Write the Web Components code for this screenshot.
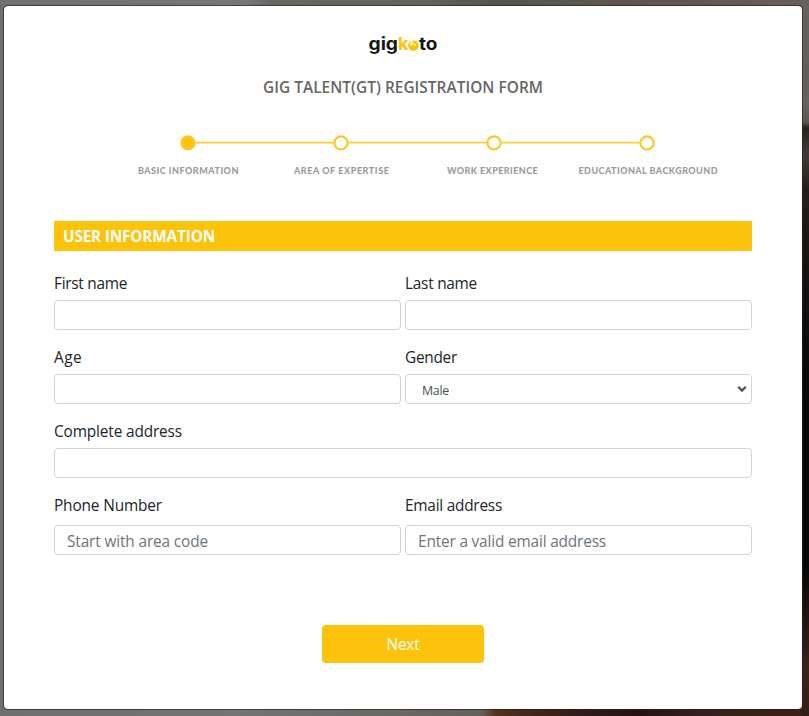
<!DOCTYPE html>
<html lang="en">
<head>
<meta charset="utf-8">
<title>Gig Talent Registration</title>
<style>
html,body{margin:0;height:100%;overflow:hidden}
body{font-family:"Open Sans","Noto Sans",sans-serif;font-size:16px;color:#212529}
</style>
</head>
<body>
<registration-page></registration-page>
<script>
const define = (name, html, setup) => customElements.define(name, class extends HTMLElement {
  constructor() {
    super();
    this.attachShadow({mode: 'open'});
  }
  connectedCallback() {
    this.shadowRoot.innerHTML = typeof html === 'function' ? html(this) : html;
    if (setup) setup(this);
  }
});

// One line of text, spaced out to an exact width.
define('fit-text', el => `<style>
:host{display:block;white-space:nowrap;line-height:24px;height:24px;width:${el.getAttribute('w')}px}
span{display:inline-block}
</style><span><slot></slot></span>`, el => {
  const span = el.shadowRoot.querySelector('span');
  const host = el.getRootNode().host;
  const length = (el.textContent.trim() || (host && host.textContent.trim()) || ' ').length;
  const extra = +el.getAttribute('w') - span.getBoundingClientRect().width;
  span.style.letterSpacing = extra / length + 'px';
});

define('brand-logo', `<style>
:host{display:block;width:72px;height:26px}
svg{display:block;overflow:visible}
text{font-family:Inter,sans-serif;font-weight:700;font-size:17.5px}
</style>
<svg width="72" height="26" viewBox="0 0 72 26">
<text x="1.5" y="16.3" textLength="29.5" lengthAdjust="spacingAndGlyphs" fill="#171717">gig</text>
<text x="31" y="16.3" textLength="10.5" lengthAdjust="spacingAndGlyphs" fill="#fdc30b">k</text>
<circle cx="46.4" cy="11.6" r="5.3" fill="#fdc30b"/>
<path d="M46.2 11.3H42.9V9.2L44.1 8.2V6H46.2ZM47 9V11.2L49 12.2V10.4Z" fill="#fff3bf"/>
<text x="52" y="16.3" textLength="18.5" lengthAdjust="spacingAndGlyphs" fill="#171717">to</text>
</svg>`);

define('step-item', el => `<style>
:host{display:flex;flex-direction:column;align-items:center;color:#9b9b9b;font-family:Lato,sans-serif;font-weight:900;font-size:9px}
svg{display:block;width:153px;height:18px;overflow:visible}
fit-text{margin-top:7px;transform:translateX(${el.getAttribute('shift') || 0}px)}
</style>
<svg viewBox="0 0 153 18">
<path d="${el.hasAttribute('last') ? '' : 'M84 8.6H222'}" stroke="#fdcb35" stroke-width="1.8"/>
<circle cx="76.5" cy="8.9" r="6.6" fill="${el.hasAttribute('first') ? '#fdc30b' : '#fff'}" stroke="#fdc827" stroke-width="2.2"/>
</svg>
<fit-text w="${el.getAttribute('w')}">${el.getAttribute('label')}</fit-text>`);

define('step-track', `<style>
:host{display:grid;grid-template-columns:repeat(4,153.2px);width:612.8px}
</style>
<step-item first label="BASIC INFORMATION" w="101" shift="0.7"></step-item>
<step-item label="AREA OF EXPERTISE" w="95.5" shift="0.8"></step-item>
<step-item label="WORK EXPERIENCE" w="91" shift="-1.5"></step-item>
<step-item last label="EDUCATIONAL BACKGROUND" w="139.5" shift="1"></step-item>`);

define('section-bar', el => `<style>
:host{display:flex;align-items:center;box-sizing:border-box;height:30px;padding:1px 9px 0;background:#fdc30b;color:#fff;font-weight:700;font-size:15.4px}
</style><fit-text w="152">${el.getAttribute('label')}</fit-text>`);

define('form-field', el => `<style>
:host{display:block;font-size:15.4px}
.box{display:flex;align-items:center;box-sizing:border-box;height:30px;margin-top:${(el.getAttribute('gap') || 5) - 1}px;padding:3px 3px 0 12px;border:1px solid #ced4da;border-radius:4px;background:#fff;color:#6c757d}
.select{justify-content:space-between;padding-left:16px;padding-top:4px;color:#495057;font-size:12.4px}
svg{display:block;margin-top:-5px}
</style>
<fit-text w="${el.getAttribute('w')}">${el.getAttribute('label')}</fit-text>
<div class="box${el.hasAttribute('select') ? ' select' : ''}">${el.hasAttribute('text') ? `<fit-text w="${el.getAttribute('tw')}">${el.getAttribute('text')}</fit-text>` : ''}
${el.hasAttribute('select') ? '<svg width="12" height="8" viewBox="0 0 12 8"><path d="M2.2 1.8L6 5.6L9.8 1.8" fill="none" stroke="#495057" stroke-width="2.2"/></svg>' : ''}</div>`);

define('primary-button', `<style>
:host{display:block}
button{display:flex;align-items:center;justify-content:center;width:162px;height:38px;border:0;border-radius:4px;padding:2px 0 0;background:#fdc30b;color:#fff;font:15.4px "Open Sans",sans-serif}
</style><button><fit-text w="33"><slot></slot></fit-text></button>`);

define('registration-page', `<style>
:host{display:block;box-sizing:border-box;height:716px;padding:5px 6px 6px 3px;
background:
linear-gradient(#65615f 0 40px,#625e5b 70px,#68635e 102px,#5d5651 122px,#29211d 128px,#463b34 155px,#251c1a 190px,#191312 260px,#0d0c0c 340px,#050505 430px,#080707 570px,#251511 625px,#3b2319 665px,#351e17) right/7px 100% no-repeat,
linear-gradient(90deg,#6f6f6d,#737372 240px,#6a6865 390px,#656059 482px,#54301f 496px,#3a2119 550px,#21130f 640px,#35211a 700px,#3b2117) bottom/100% 7px no-repeat,
linear-gradient(90deg,#70706c,#777775 245px,#696762 270px,#65625d 420px,#58544e 490px,#5d5852 680px,#65605b) top/100% 7px no-repeat,
#6f6f6d}
main{display:flex;flex-direction:column;align-items:center;box-sizing:border-box;width:800px;height:705px;padding:28px 50px 0;border:1px solid rgba(35,30,30,.65);border-radius:5px;background:#fff;background-clip:padding-box}
.title{margin-top:16px;font-size:15.4px;font-weight:600;color:#666}
step-track{margin-top:34px;transform:translateX(14.5px)}
section-bar{align-self:stretch;margin-top:38px}
form{align-self:stretch;display:grid;grid-template-columns:347px 347px;column-gap:4px;row-gap:16px;margin-top:21px}
form-field{height:58px}
form-field.low{height:61px}
.wide{grid-column:span 2}
primary-button{margin-top:70px}
</style>
<main>
<brand-logo></brand-logo>
<fit-text class="title" w="280">GIG TALENT(GT) REGISTRATION FORM</fit-text>
<step-track></step-track>
<section-bar label="USER INFORMATION"></section-bar>
<form>
<form-field label="First name" w="73"></form-field>
<form-field label="Last name" w="72"></form-field>
<form-field label="Age" w="28"></form-field>
<form-field label="Gender" w="52" select text="Male" tw="27"></form-field>
<form-field class="wide" label="Complete address" w="128"></form-field>
<form-field class="low" label="Phone Number" w="108" gap="8" text="Start with area code" tw="141"></form-field>
<form-field class="low" label="Email address" w="97" gap="8" text="Enter a valid email address" tw="188"></form-field>
</form>
<primary-button>Next</primary-button>
</main>`);
</script>
</body>
</html>
